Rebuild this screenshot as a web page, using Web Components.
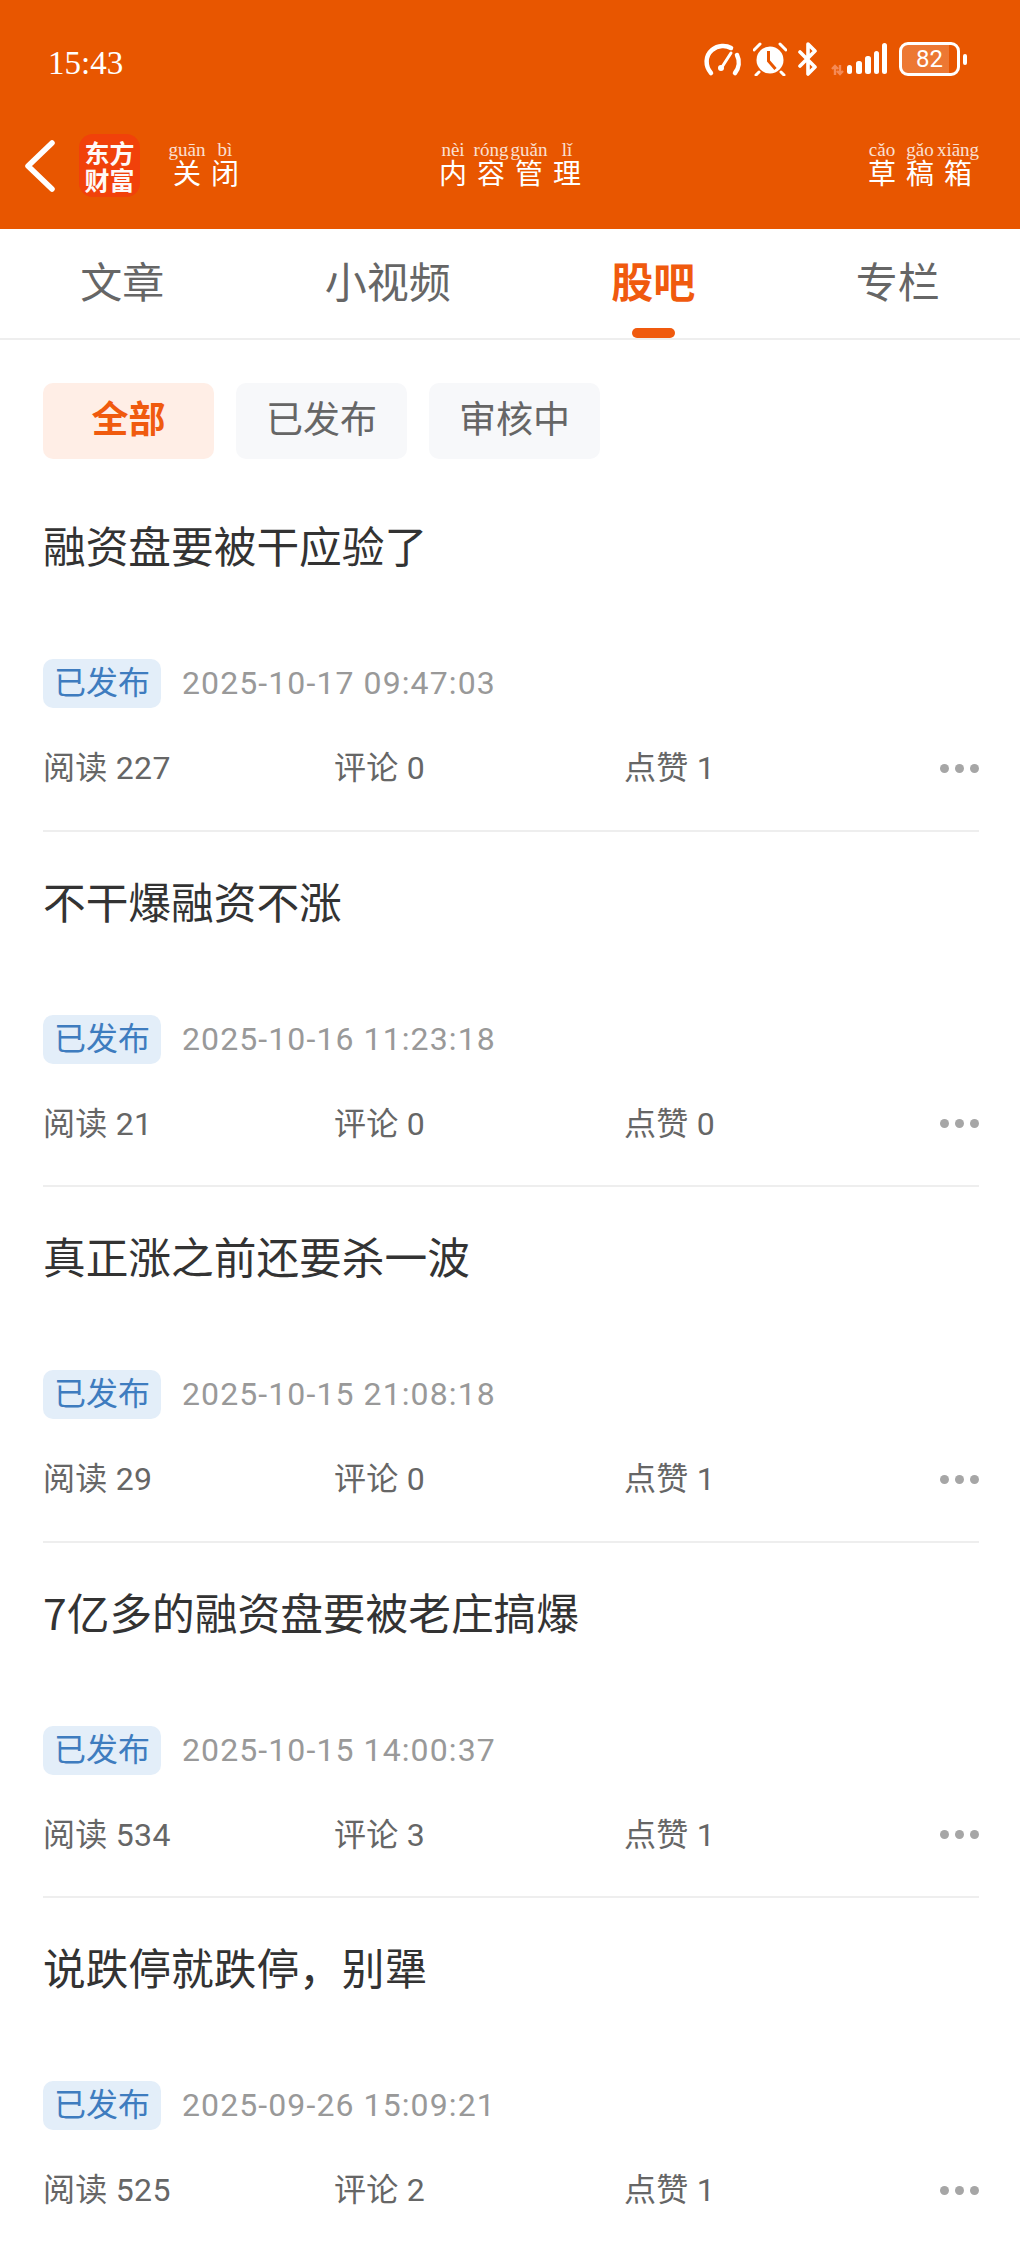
<!DOCTYPE html>
<html lang="zh">
<head>
<meta charset="utf-8">
<title>内容管理</title>
<style>
  html, body { margin: 0; background: #fff; }
  body { font-family: Roboto, "Noto Sans CJK SC", sans-serif; }
</style>
</head>
<body>
<app-header></app-header>
<tab-bar tabs="文章,小视频,股吧,专栏" active="2"></tab-bar>
<filter-chips chips="全部,已发布,审核中" active="0"></filter-chips>
<post-item status="已发布" date="2025-10-17 09:47:03" reads="227" comments="0" likes="1">融资盘要被干应验了</post-item>
<post-item status="已发布" date="2025-10-16 11:23:18" reads="21" comments="0" likes="0">不干爆融资不涨</post-item>
<post-item status="已发布" date="2025-10-15 21:08:18" reads="29" comments="0" likes="1">真正涨之前还要杀一波</post-item>
<post-item status="已发布" date="2025-10-15 14:00:37" reads="534" comments="3" likes="1">7亿多的融资盘要被老庄搞爆</post-item>
<post-item status="已发布" date="2025-09-26 15:09:21" reads="525" comments="2" likes="1">说跌停就跌停，别犟</post-item>

<script>
// Status bar at the top of the phone
class StatusBar extends HTMLElement {
  constructor() {
    super();
    this.attachShadow({ mode: 'open' });
  }

  connectedCallback() {
    this.shadowRoot.innerHTML = `
      <style>
        :host { display: flex; align-items: flex-start; justify-content: space-between; height: 126px; color: #fff; }
        .time { margin: 45px 0 0 48px; font: 33px/36px "Liberation Serif", serif; }
        .icons { display: flex; align-items: flex-start; margin: 42px 53px 0 0; }
        svg { display: block; }
        .battery { position: relative; width: 61px; height: 34px; margin-left: 12px; box-sizing: border-box; border: 3px solid #fff; border-radius: 9px; font: 24px/29px Roboto, sans-serif; text-align: center; background: linear-gradient(90deg, rgba(255,255,255,.2) 86%, transparent 86%); }
        .nub { width: 4px; height: 11px; margin: 12px 0 0 3px; border-radius: 2px; background: #fff; }
      </style>
      <span class="time">15:43</span>
      <div class="icons">
        <svg width="38" height="34" viewBox="0 0 38 34" fill="none" stroke="#fff" stroke-width="4.5" stroke-linecap="round" style="margin-top:1px">
          <path d="M7 30C1 23 1 13 8 7c6-5 14-5 19-2"/>
          <path d="M33 12c3 6 2 13-2 18"/>
          <path d="M18 24l9-14" stroke-width="3"/>
          <circle cx="17" cy="25" r="3" fill="#fff" stroke="none"/>
        </svg>
        <svg width="34" height="34" viewBox="0 0 34 34" style="margin-left:11px">
          <circle cx="17" cy="18" r="13.5" fill="#fff"/>
          <path d="M15.5 9v10l7 8" fill="none" stroke="#e85600" stroke-width="3"/>
          <path d="M1 8l6-6M33 8l-6-6M6 30l-3 3M28 30l3 3" fill="none" stroke="#fff" stroke-width="3" stroke-linecap="round"/>
        </svg>
        <svg width="20" height="34" viewBox="0 0 20 34" fill="none" stroke="#fff" stroke-width="3.6" stroke-linecap="round" stroke-linejoin="round" style="margin-left:11px">
          <path d="M2 10l15 15-7 7V2l7 7L2 24"/>
        </svg>
        <svg width="56" height="34" viewBox="0 0 56 34" style="margin-left:13px">
          <path d="M4 33V24M1 27l3-3 3 3M9 23v9M6 29l3 3 3-3" fill="none" stroke="#f58a55" stroke-width="2.4"/>
          <rect x="16" y="23" width="5" height="9" rx="2.5" fill="#fff"/>
          <rect x="25" y="19" width="6" height="13" rx="2.5" fill="#fff"/>
          <rect x="34" y="14" width="6" height="18" rx="2.5" fill="#fff"/>
          <rect x="43" y="9" width="5" height="23" rx="2.5" fill="#fff"/>
          <rect x="51" y="1" width="5" height="31" rx="2.5" fill="#fff"/>
        </svg>
        <div class="battery">82</div>
        <div class="nub"></div>
      </div>
    `;
  }
}
customElements.define('status-bar', StatusBar);

// Title with pinyin above every character
class PinyinWord extends HTMLElement {
  constructor() {
    super();
    this.attachShadow({ mode: 'open' });
  }

  connectedCallback() {
    const chars = [...this.getAttribute('text')];
    const pinyin = this.getAttribute('pinyin').split(' ');
    const cells = chars.map((c, i) => `<div class="cell"><span class="py">${pinyin[i]}</span><span class="ch">${c}</span></div>`).join('');
    this.shadowRoot.innerHTML = `
      <style>
        :host { display: flex; color: #fff; }
        .cell { width: 38px; display: flex; flex-direction: column; align-items: center; }
        .py { font: 19px/15px "Liberation Serif", serif; opacity: .82; white-space: nowrap; }
        .ch { font: 400 28px/30px "Noto Sans CJK SC", sans-serif; }
      </style>
      ${cells}
    `;
  }
}
customElements.define('pinyin-word', PinyinWord);

// Orange header: status bar and the title row
class AppHeader extends HTMLElement {
  constructor() {
    super();
    this.attachShadow({ mode: 'open' });
  }

  connectedCallback() {
    this.shadowRoot.innerHTML = `
      <style>
        :host { display: block; height: 229px; background: #e85600; }
        .row { display: grid; grid-template-columns: 1fr auto 1fr; align-items: start; padding: 16px 43px 0 25px; }
        .left { display: flex; align-items: flex-start; }
        .right { justify-self: end; }
        .back { display: block; margin: -2px 0 0 0; }
        .logo { width: 61px; height: 63px; margin: -8px 28px 0 24px; border-radius: 14px; background: #f2410b; color: #fff; display: flex; align-items: center; justify-content: center; text-align: center; font: 700 25px/27px "Noto Sans CJK SC", sans-serif; opacity: .97; }
        .mid { margin-left: 18px; }
      </style>
      <status-bar></status-bar>
      <div class="row">
        <div class="left">
          <svg class="back" width="30" height="52" viewBox="0 0 30 52" fill="none" stroke="#fff" stroke-width="5.5" stroke-linecap="round" stroke-linejoin="round"><path d="M27 3L3 26l24 23"/></svg>
          <div class="logo">东方<br>财富</div>
          <pinyin-word text="关闭" pinyin="guān bì"></pinyin-word>
        </div>
        <pinyin-word class="mid" text="内容管理" pinyin="nèi róng guǎn lǐ"></pinyin-word>
        <pinyin-word class="right" text="草稿箱" pinyin="cǎo gǎo xiāng"></pinyin-word>
      </div>
    `;
  }
}
customElements.define('app-header', AppHeader);

// Top tabs, the active one gets the orange mark
class TabBar extends HTMLElement {
  constructor() {
    super();
    this.attachShadow({ mode: 'open' });
  }

  connectedCallback() {
    const active = Number(this.getAttribute('active'));
    const tabs = this.getAttribute('tabs').split(',').map((t, i) => `<div class="tab${i === active ? ' on' : ''}">${t}</div>`).join('');
    this.shadowRoot.innerHTML = `
      <style>
        :host { display: flex; justify-content: space-around; height: 111px; box-sizing: border-box; border-bottom: 2px solid #eee; background: #fff; }
        .tab { position: relative; font: 400 42px/101px "Noto Sans CJK SC", sans-serif; color: #666; height: 109px; }
        .on { font-weight: 700; color: #f05a0e; }
        .on::after { content: ""; position: absolute; left: 50%; bottom: 0; width: 43px; height: 10px; margin-left: -21.5px; border-radius: 5px; background: #f05a0e; }
      </style>
      ${tabs}
    `;
  }
}
customElements.define('tab-bar', TabBar);

class FilterChips extends HTMLElement {
  constructor() {
    super();
    this.attachShadow({ mode: 'open' });
  }

  connectedCallback() {
    const active = Number(this.getAttribute('active'));
    const chips = this.getAttribute('chips').split(',').map((c, i) => `<div class="chip${i === active ? ' on' : ''}">${c}</div>`).join('');
    this.shadowRoot.innerHTML = `
      <style>
        :host { display: flex; gap: 22px; padding: 43px 43px 17px; }
        .chip { width: 171px; height: 76px; border-radius: 10px; background: #f7f8fa; color: #666; font: 400 37px/69px "Noto Sans CJK SC", sans-serif; text-align: center; }
        .on { background: #ffeee6; color: #f05a0e; font-weight: 700; }
      </style>
      ${chips}
    `;
  }
}
customElements.define('filter-chips', FilterChips);

// One post of the list, its title goes in the slot
class PostItem extends HTMLElement {
  constructor() {
    super();
    this.attachShadow({ mode: 'open' });
  }

  connectedCallback() {
    const a = (name) => this.getAttribute(name);
    this.shadowRoot.innerHTML = `
      <style>
        :host { display: block; margin: 0 41px 0 43px; height: 355.5px; box-sizing: border-box; padding-top: 41px; border-bottom: 2px solid #eee; }
        .title { height: 142px; font: 400 42.7px/55px "Noto Sans CJK SC", sans-serif; color: #333; }
        .meta { display: flex; align-items: flex-start; height: 49px; }
        .badge { width: 118px; height: 49px; border-radius: 10px; background: #e3eef9; color: #3e7cbf; font: 400 32px/43px "Noto Sans CJK SC", sans-serif; text-align: center; }
        .date { margin-left: 21px; font: 400 32px/48px Roboto, sans-serif; letter-spacing: 1.1px; color: #999; }
        .stats { display: grid; grid-template-columns: 291px 290px 1fr auto; align-items: center; height: 44px; margin-top: 38px; font: 400 32px/44px Roboto, "Noto Sans CJK SC", sans-serif; letter-spacing: .3px; color: #666; }
        .dots { display: flex; gap: 6px; }
        .dots i { width: 9px; height: 9px; border-radius: 50%; background: #a6a6a6; }
      </style>
      <div class="title"><slot></slot></div>
      <div class="meta"><div class="badge">${a('status')}</div><div class="date">${a('date')}</div></div>
      <div class="stats">
        <span>阅读 ${a('reads')}</span>
        <span>评论 ${a('comments')}</span>
        <span>点赞 ${a('likes')}</span>
        <div class="dots"><i></i><i></i><i></i></div>
      </div>
    `;
  }
}
customElements.define('post-item', PostItem);
</script>
</body>
</html>
